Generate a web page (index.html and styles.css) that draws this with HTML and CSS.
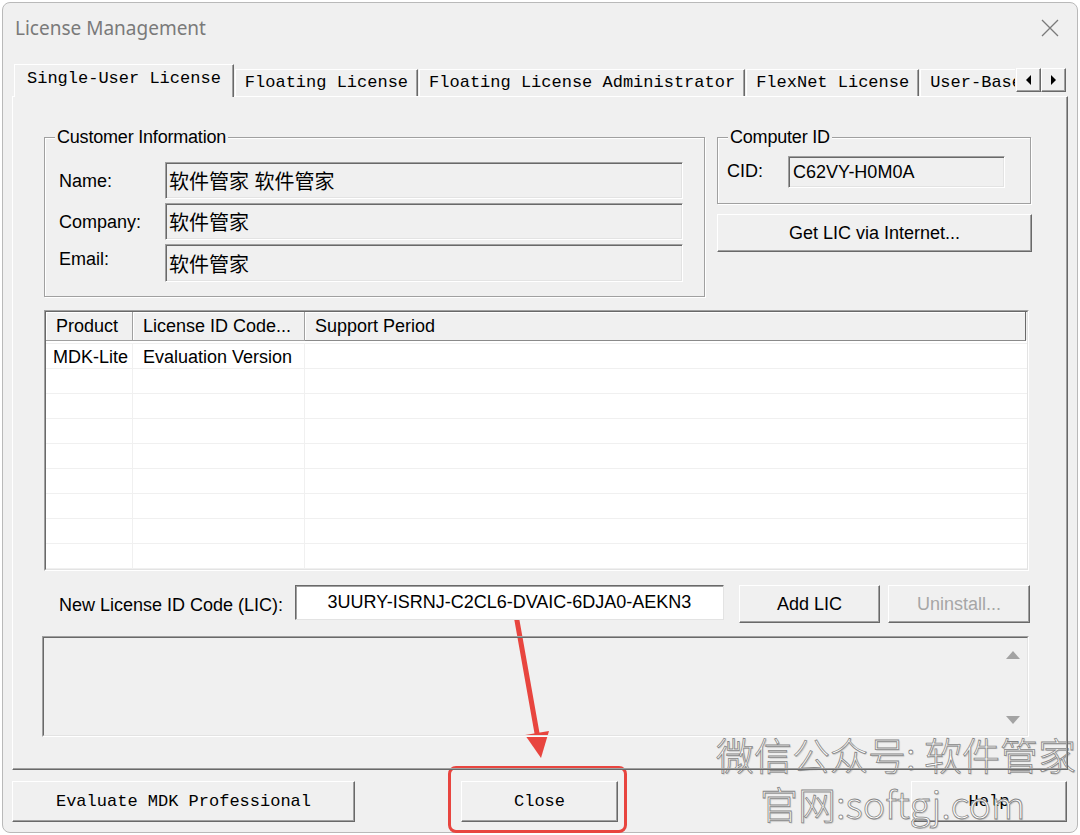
FILE: index.html
```html
<!DOCTYPE html>
<html lang="zh-CN">
<head>
    <meta charset="UTF-8">
    <title>License Management</title>
    <link rel="stylesheet" href="styles.css">
</head>
<body>
    <div class="window">
        <!-- Barra de título -->
        <div class="titlebar">
            <span class="title">License Management</span>
            <svg class="close-x" width="18" height="18" viewBox="0 0 18 18">
                <path d="M1 1 L17 17 M17 1 L1 17" stroke="#7a7a7a" stroke-width="1.3" fill="none"/>
            </svg>
        </div>

        <!-- Pestañas -->
        <div class="tabs">
            <div class="tab-list">
                <div class="tab active">Single-User License</div>
                <div class="tab">Floating License</div>
                <div class="tab">Floating License Administrator</div>
                <div class="tab">FlexNet License</div>
                <div class="tab">User-Based License</div>
            </div>
            <div class="tab-arrows">
                <span class="arrow-btn"><span class="tri-left"></span></span>
                <span class="arrow-btn"><span class="tri-right"></span></span>
            </div>
        </div>

        <div class="tab-panel">
            <div class="top-row">
                <fieldset class="group customer">
                    <legend>Customer Information</legend>
                    <div class="fields">
                        <span class="label">Name:</span>
                        <div class="field cjk">软件管家 软件管家</div>
                        <span class="label">Company:</span>
                        <div class="field cjk">软件管家</div>
                        <span class="label label-top">Email:</span>
                        <div class="field cjk">软件管家</div>
                    </div>
                </fieldset>

                <div class="side">
                    <fieldset class="group computer">
                        <legend>Computer ID</legend>
                        <div class="cid-row">
                            <span class="label">CID:</span>
                            <div class="field cid">C62VY-H0M0A</div>
                        </div>
                    </fieldset>
                    <button class="btn get-lic">Get LIC via Internet...</button>
                </div>
            </div>

            <!-- Lista de licencias -->
            <div class="sunken list">
                <div class="sunken-inner">
                    <div class="list-head">
                        <div class="head-cell">Product</div>
                        <div class="head-cell">License ID Code...</div>
                        <div class="head-cell last">Support Period</div>
                    </div>
                    <div class="list-body">
                        <div class="row"><div class="cell">MDK-Lite</div><div class="cell">Evaluation Version</div><div class="cell"></div></div>
                        <div class="row"><div class="cell"></div><div class="cell"></div><div class="cell"></div></div>
                        <div class="row"><div class="cell"></div><div class="cell"></div><div class="cell"></div></div>
                        <div class="row"><div class="cell"></div><div class="cell"></div><div class="cell"></div></div>
                        <div class="row"><div class="cell"></div><div class="cell"></div><div class="cell"></div></div>
                        <div class="row"><div class="cell"></div><div class="cell"></div><div class="cell"></div></div>
                        <div class="row"><div class="cell"></div><div class="cell"></div><div class="cell"></div></div>
                        <div class="row"><div class="cell"></div><div class="cell"></div><div class="cell"></div></div>
                        <div class="row"><div class="cell"></div><div class="cell"></div><div class="cell"></div></div>
                        <div class="row"><div class="cell"></div><div class="cell"></div><div class="cell"></div></div>
                    </div>
                </div>
            </div>

            <!-- Nuevo LIC -->
            <div class="lic-row">
                <span class="lic-label">New License ID Code (LIC):</span>
                <div class="lic-input">3UURY-ISRNJ-C2CL6-DVAIC-6DJA0-AEKN3</div>
                <button class="btn add-lic">Add LIC</button>
                <button class="btn uninstall">Uninstall...</button>
            </div>

            <!-- Mensajes -->
            <div class="sunken messages">
                <div class="sunken-inner msg-inner">
                    <div class="msg-text"></div>
                    <div class="scrollbar">
                        <span class="tri-up"></span>
                        <span class="tri-down"></span>
                    </div>
                </div>
            </div>
        </div>

        <!-- Botones inferiores -->
        <div class="footer">
            <button class="btn mono evaluate">Evaluate MDK Professional</button>
            <button class="btn mono close">Close</button>
            <button class="btn mono help">Help</button>
        </div>
    </div>

    <!-- Anotaciones sobre la captura -->
    <div class="highlight"></div>
    <svg class="pointer" width="70" height="175" viewBox="0 0 70 175">
        <line x1="18" y1="8" x2="42.5" y2="146" stroke="#e8453f" stroke-width="5" stroke-linecap="round"/>
        <polygon points="46,168 54,141 30,145" fill="#e8453f"/>
    </svg>
    <div class="watermark">
        <div class="wm-line1">微信公众号: 软件管家</div>
        <div class="wm-line2">官网:softgj.com</div>
    </div>
</body>
</html>
```

FILE: styles.css
```css
/* Estilos generales */
* {
    box-sizing: border-box;
}

body {
    margin: 0;
    background: #ffffff;
    font-family: "Liberation Sans", "Noto Sans CJK SC", sans-serif;
    font-size: 18px;
    color: #000;
}

.window {
    width: 1076px;
    height: 831px;
    margin: 2px 0 0 2px;
    background: #f0f0f0;
    border: 1px solid #b9b9b9;
    border-radius: 8px;
    overflow: hidden;
}

/* Barra de título */
.titlebar {
    display: flex;
    align-items: center;
    justify-content: space-between;
    height: 50px;
    padding: 0 18px 0 12px;
}

.title {
    font-family: "Noto Sans", "Open Sans", sans-serif;
    font-size: 19px;
    color: #7a7a7a;
}

/* Pestañas */
.tabs {
    display: flex;
    align-items: flex-end;
    height: 32px;
    margin-top: 11px;
    padding-left: 11px;
}

.tab-list {
    display: flex;
    align-items: flex-end;
    width: 1001px;
    height: 100%;
    overflow-x: clip;
    overflow-y: visible;
}

.tab {
    flex: none;
    height: 27px;
    margin-left: 1px;
    padding: 0 9px;
    font-family: "Liberation Mono", monospace;
    font-size: 17px;
    line-height: 26px;
    white-space: nowrap;
    border-top: 1px solid #fff;
    border-left: 1px solid #fff;
    border-right: 1px solid #696969;
    box-shadow: inset -1px 0 #a0a0a0;
}

.tab.active {
    position: relative;
    z-index: 2;
    height: 33px;
    margin: 0 0 -1px 0;
    padding: 0 12px;
    line-height: 28px;
    background: #f0f0f0;
}

.tab-arrows {
    display: flex;
    align-self: flex-start;
    margin: 4px 0 0 1px;
}

.arrow-btn {
    display: flex;
    align-items: center;
    justify-content: center;
    width: 25px;
    height: 24px;
    border: 1px solid;
    border-color: #fff #696969 #696969 #fff;
    box-shadow: inset -1px -1px #a0a0a0;
}

.tri-left {
    border-top: 5px solid transparent;
    border-bottom: 5px solid transparent;
    border-right: 5px solid #000;
}

.tri-right {
    border-top: 5px solid transparent;
    border-bottom: 5px solid transparent;
    border-left: 5px solid #000;
}

/* Panel de la pestaña */
.tab-panel {
    position: relative;
    z-index: 1;
    width: 1056px;
    height: 674px;
    margin-left: 9px;
    padding: 31px 0 0 31px;
    border: 1px solid;
    border-color: #fff #696969 #696969 #fff;
    box-shadow: inset -1px -1px #a0a0a0;
}

.top-row {
    display: flex;
    align-items: flex-start;
    gap: 12px;
}

/* Grupos */
.group {
    margin: 0;
    padding: 0;
    border: 1px solid #a0a0a0;
    box-shadow: inset 1px 1px #fff, 1px 1px #fff;
}

.group legend {
    margin-left: 10px;
    padding: 0 2px;
    line-height: 18px;
    letter-spacing: -0.2px;
    background: #f0f0f0;
}

.customer {
    width: 661px;
}

.customer .fields {
    display: grid;
    grid-template-columns: 106px 518px;
    grid-template-rows: 37px 37px 38px;
    row-gap: 4px;
    align-items: center;
    padding: 16px 0 14px 14px;
}

.label {
    padding-top: 2px;
}

.label-top {
    align-self: start;
    padding-top: 5px;
}

.field {
    height: 100%;
    padding-left: 3px;
    border: 1px solid;
    border-color: #a0a0a0 #fff #fff #a0a0a0;
    box-shadow: inset 1px 1px #696969, inset -1px -1px #e3e3e3;
    display: flex;
    align-items: center;
    white-space: nowrap;
}

.cjk {
    font-size: 20px;
}

.side {
    width: 315px;
}

.computer {
    width: 314px;
}

.cid-row {
    display: flex;
    align-items: center;
    padding: 10px 0 15px 9px;
}

.cid-row .label {
    width: 61px;
    margin-top: -4px;
}

.cid {
    width: 217px;
    height: 32px;
    padding-left: 4px;
}

/* Botones */
.btn {
    font: inherit;
    color: #000;
    background: #f0f0f0;
    padding: 0;
    border: 1px solid;
    border-color: #fff #696969 #696969 #fff;
    box-shadow: inset -1px -1px #a0a0a0;
}

.get-lic {
    display: block;
    width: 315px;
    height: 38px;
    margin-top: 10px;
}

/* Lista */
.sunken {
    border: 1px solid;
    border-color: #a0a0a0 #fff #fff #a0a0a0;
}

.sunken-inner {
    height: 100%;
    border: 1px solid;
    border-color: #696969 #e3e3e3 #e3e3e3 #696969;
    overflow: hidden;
}

.list {
    width: 985px;
    height: 261px;
    margin-top: 13px;
}

.list .sunken-inner {
    background: #fff;
}

.list-head {
    display: grid;
    grid-template-columns: 87px 172px 721px;
    height: 28px;
    background: #f0f0f0;
}

.head-cell {
    padding-left: 10px;
    line-height: 28px;
    border-right: 1px solid #a0a0a0;
    border-bottom: 1px solid #a0a0a0;
    box-shadow: inset 1px 1px #fff;
    white-space: nowrap;
}

.head-cell.last {
    border-right-color: #696969;
    border-bottom-color: #8a8a8a;
}

.list-body {
    margin-top: 3px;
    border-top: 1px solid #f0f0f0;
}

.row {
    display: grid;
    grid-template-columns: 87px 172px 1fr;
    height: 25px;
    border-bottom: 1px solid #f0f0f0;
}

.cell {
    padding-left: 10px;
    line-height: 26px;
    white-space: nowrap;
    border-right: 1px solid #f0f0f0;
}

.cell:first-child {
    padding-left: 7px;
}

.cell:last-child {
    border-right: none;
}

/* Fila LIC */
.lic-row {
    display: flex;
    align-items: flex-start;
    height: 38px;
    margin-top: 14px;
}

.lic-label {
    width: 236px;
    margin: 10px 0 0 15px;
}

.lic-input {
    width: 429px;
    height: 35px;
    line-height: 33px;
    text-align: center;
    background: #fff;
    border: 1px solid;
    border-color: #696969 #e3e3e3 #e3e3e3 #696969;
    box-shadow: inset 1px 1px #a0a0a0;
}

.add-lic {
    width: 141px;
    height: 38px;
    margin-left: 15px;
}

.uninstall {
    width: 142px;
    height: 38px;
    margin-left: 8px;
    color: #a6a6a6;
}

/* Mensajes */
.messages {
    width: 987px;
    height: 101px;
    margin: 13px 0 0 -2px;
}

.msg-inner {
    display: flex;
}

.msg-text {
    flex: 1;
}

.scrollbar {
    display: flex;
    flex-direction: column;
    justify-content: space-between;
    align-items: center;
    width: 28px;
    padding: 13px 0 11px;
}

.tri-up {
    border-left: 7px solid transparent;
    border-right: 7px solid transparent;
    border-bottom: 8px solid #a3a3a3;
}

.tri-down {
    border-left: 7px solid transparent;
    border-right: 7px solid transparent;
    border-top: 8px solid #a3a3a3;
}

/* Pie */
.footer {
    display: flex;
    margin-top: 11px;
    padding: 0 10px 0 9px;
}

.mono {
    font-family: "Liberation Mono", monospace;
    font-size: 17px;
    height: 41px;
}

.evaluate {
    width: 343px;
}

.close {
    width: 157px;
    margin-left: 106px;
}

.help {
    width: 156px;
    margin-left: auto;
}

/* Anotaciones */
.highlight {
    position: absolute;
    left: 448px;
    top: 766px;
    width: 179px;
    height: 67px;
    border: 3px solid #e8453f;
    border-radius: 8px;
}

.pointer {
    position: absolute;
    left: 495px;
    top: 590px;
}

.watermark {
    position: absolute;
    left: 716px;
    top: 728px;
    font-family: "Noto Sans CJK SC", sans-serif;
    font-weight: 300;
    color: #fff;
    -webkit-text-stroke: 0.8px #858585;
    text-shadow: 1px 1px 1px rgba(0, 0, 0, 0.18);
    white-space: nowrap;
}

.wm-line1 {
    font-size: 38px;
    line-height: 52px;
}

.wm-line2 {
    margin-left: 44px;
    font-size: 38px;
    line-height: 46px;
}
```
